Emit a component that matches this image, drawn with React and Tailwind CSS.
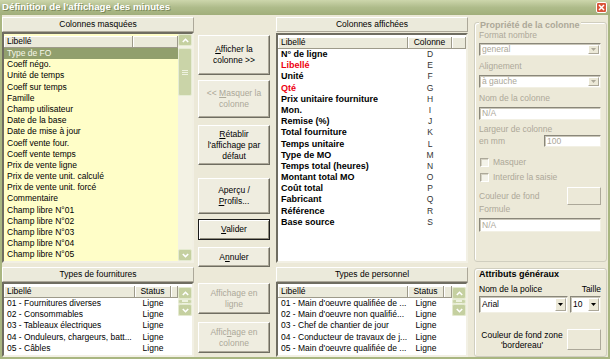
import React from "react";

const masquees = [
  "Type de FO",
  "Coeff négo.",
  "Unité de temps",
  "Coeff sur temps",
  "Famille",
  "Champ utilisateur",
  "Date de la base",
  "Date de mise à jour",
  "Coeff vente four.",
  "Coeff vente temps",
  "Prix de vente ligne",
  "Prix de vente unit. calculé",
  "Prix de vente unit. forcé",
  "Commentaire",
  "Champ libre N°01",
  "Champ libre N°02",
  "Champ libre N°03",
  "Champ libre N°04",
  "Champ libre N°05",
  "Champ libre N°06",
];

const affichees = [
  { label: "N° de ligne", col: "D" },
  { label: "Libellé", col: "E", red: true },
  { label: "Unité", col: "F" },
  { label: "Qté", col: "G", red: true },
  { label: "Prix unitaire fourniture", col: "H" },
  { label: "Mon.", col: "I" },
  { label: "Remise (%)", col: "J" },
  { label: "Total fourniture", col: "K" },
  { label: "Temps unitaire", col: "L" },
  { label: "Type de MO", col: "M" },
  { label: "Temps total (heures)", col: "N" },
  { label: "Montant total MO", col: "O" },
  { label: "Coût total", col: "P" },
  { label: "Fabricant", col: "Q" },
  { label: "Référence", col: "R" },
  { label: "Base source", col: "S" },
];

const fournitures = [
  "01 - Fournitures diverses",
  "02 - Consommables",
  "03 - Tableaux électriques",
  "04 - Onduleurs, chargeurs, batt...",
  "05 - Câbles",
];

const personnel = [
  "01 - Main d'oeuvre qualifiée de ...",
  "02 - Main d'oeuvre non qualifié...",
  "03 - Chef de chantier de jour",
  "04 - Conducteur de travaux de j...",
  "05 - Main d'oeuvre qualifiée de ...",
];

const ScrollArrow = ({ up }) => (
  <div className="h-[12px] w-[14px] shrink-0 flex items-center justify-center bg-[#c5d0a0] border border-[#e4ead0] rounded-[2px]">
    <svg width="7" height="5" viewBox="0 0 7 5">
      <path
        d={up ? "M0.8 4 L3.5 1.3 L6.2 4" : "M0.8 1 L3.5 3.7 L6.2 1"}
        fill="none"
        stroke="#fff"
        strokeWidth="1.6"
      />
    </svg>
  </div>
);

const Scrollbar = ({ thumb }) => (
  <div className="w-[14px] shrink-0 flex flex-col bg-[#f3f2e4]">
    <ScrollArrow up />
    <div className="flex-1 flex flex-col">
      <div className={thumb + " w-[14px] bg-[#cad4a8] border border-[#e6ecd4] rounded-[2px] flex flex-col items-center justify-center gap-[1px]"}>
        <div className="w-[6px] h-px bg-[#eef2e0]" />
        <div className="w-[6px] h-px bg-[#eef2e0]" />
        <div className="w-[6px] h-px bg-[#eef2e0]" />
      </div>
    </div>
    <ScrollArrow />
  </div>
);

const HeadCell = ({ children, className }) => (
  <div className={"h-[12px] flex items-center px-[3px] bg-[#ebeadb] border-r border-b border-[#9d9a8a] shadow-[inset_1px_1px_0_#fff] " + className}>
    {children}
  </div>
);

const SectionHeader = ({ children }) => (
  <div className="h-[15px] shrink-0 flex items-center justify-center bg-[#ebeadb] border border-t-white border-l-white border-b-[#aca899] border-r-[#aca899]">
    {children}
  </div>
);

const Btn = ({ children, className, disabled, def }) => (
  <div
    className={
      "w-[72px] flex flex-col items-center justify-center text-center leading-[11px] bg-[#efede0] border " +
      (def
        ? "border-[#1c1c1c] shadow-[inset_1px_1px_0_#fff,inset_-1px_-1px_0_#8e8b7c] "
        : "border-t-white border-l-white border-b-[#6f6d61] border-r-[#6f6d61] shadow-[inset_-1px_-1px_0_#aca899] ") +
      (disabled ? "text-[#aca899] " : "text-black ") +
      className
    }
  >
    {children}
  </div>
);

const Select = ({ value, disabled, className }) => (
  <div className={"flex bg-white border border-t-[#8a877a] border-l-[#8a877a] border-b-[#f2f0e4] border-r-[#f2f0e4] shadow-[inset_1px_1px_0_#c9c6b8] " + className}>
    <div className={"flex-1 flex items-center px-[2px] " + (disabled ? "text-[#aca899]" : "text-black")}>{value}</div>
    <div className="w-[11px] m-px flex items-center justify-center bg-[#ece9d8] border border-t-white border-l-white border-b-[#aca899] border-r-[#aca899]">
      <svg width="5" height="3" viewBox="0 0 5 3">
        <path d="M0 0 H5 L2.5 3 Z" fill={disabled ? "#aca899" : "#000"} />
      </svg>
    </div>
  </div>
);

const Input = ({ value, className }) => (
  <div className={"flex items-center px-[2px] bg-white text-[#aca899] border border-t-[#8a877a] border-l-[#8a877a] border-b-[#f2f0e4] border-r-[#f2f0e4] shadow-[inset_1px_1px_0_#c9c6b8] " + className}>
    {value}
  </div>
);

const Check = ({ label }) => (
  <div className="flex items-center gap-[4px] h-[10px] text-[#aca899]">
    <div className="w-[9px] h-[9px] ml-[1px] bg-[#f4f3ea] border border-t-[#aca899] border-l-[#aca899] border-b-white border-r-white shadow-[inset_1px_1px_0_#d6d3c4]" />
    <span>{label}</span>
  </div>
);

const ListBox = ({ className, children }) => (
  <div className={"flex border-2 border-t-[#6f6d61] border-l-[#6f6d61] border-b-[#f2f0e4] border-r-[#f2f0e4] overflow-hidden " + className}>
    {children}
  </div>
);

export default function App() {
  return (
    <div className="w-[610px] h-[359px] flex flex-col bg-[#ece9d8] overflow-hidden font-['Liberation_Sans',Arial,sans-serif] text-[8.5px] text-black">
      {/* barre de titre */}
      <div className="h-[15px] shrink-0 flex items-center justify-between pl-[2px] pr-[3px] bg-gradient-to-b from-[#cdd6ac] via-[#aebb8a] to-[#a1af7b]">
        <span className="text-[9.7px] font-bold text-white [text-shadow:1px_1px_0_#7d8a5a]">
          Définition de l'affichage des minutes
        </span>
        <div className="w-[11px] h-[11px] flex items-center justify-center bg-[#d9543a] border border-white rounded-[2px]">
          <svg width="7" height="7" viewBox="0 0 7 7">
            <path d="M1 1 L6 6 M6 1 L1 6" stroke="#fff" strokeWidth="1.5" />
          </svg>
        </div>
      </div>

      <div className="flex-1 flex min-h-0 border-x-2 border-b-2 border-[#a9b681] pt-[2px]">
        {/* colonnes masquées */}
        <div className="w-[192px] flex flex-col">
          <SectionHeader>Colonnes masquées</SectionHeader>
          <ListBox className="h-[231px] bg-[#fffec8]">
            <div className="flex-1 flex flex-col min-w-0">
              <div className="flex shrink-0 mt-[2px]">
                <HeadCell className="w-[129px]">Libellé</HeadCell>
                <HeadCell className="flex-1" />
              </div>
              {masquees.map((m, i) => (
                <div
                  key={m}
                  className={
                    "h-[11.2px] shrink-0 leading-[11.2px] px-[3px] whitespace-nowrap " +
                    (i === 0 ? "bg-[#919f6d] text-[#f7f7ea]" : "")
                  }
                >
                  {m}
                </div>
              ))}
            </div>
            <Scrollbar thumb="mt-[2px] h-[48px]" />
          </ListBox>
          <div className="mt-[4px]">
            <SectionHeader>Types de fournitures</SectionHeader>
          </div>
          <ListBox className="flex-1 bg-white">
            <div className="flex-1 flex flex-col min-w-0">
              <div className="flex shrink-0 mt-[2px]">
                <HeadCell className="w-[131px]">Libellé</HeadCell>
                <HeadCell className="w-[36px] justify-center">Status</HeadCell>
                <HeadCell className="flex-1" />
              </div>
              {fournitures.map((f) => (
                <div key={f} className="flex h-[11.2px] shrink-0 leading-[11.2px] whitespace-nowrap">
                  <div className="w-[131px] px-[3px]">{f}</div>
                  <div className="w-[36px] text-center">Ligne</div>
                </div>
              ))}
            </div>
            <div className="flex flex-col pt-[3px]">
              <Scrollbar thumb="h-[5px]" />
            </div>
          </ListBox>
        </div>

        {/* boutons */}
        <div className="w-[72px] ml-[4px] flex flex-col">
          <Btn className="mt-[18px] h-[40px]">
            <span><u>A</u>fficher la</span>
            <span>colonne &gt;&gt;</span>
          </Btn>
          <Btn className="mt-[5px] h-[38px]" disabled>
            <span>&lt;&lt; <u>M</u>asquer la</span>
            <span>colonne</span>
          </Btn>
          <Btn className="mt-[7px] h-[40px]">
            <span><u>R</u>établir</span>
            <span>l'affichage par</span>
            <span>défaut</span>
          </Btn>
          <Btn className="mt-[13px] h-[36px]">
            <span>Aperçu /</span>
            <span><u>P</u>rofils...</span>
          </Btn>
          <Btn className="mt-[5px] h-[21px]" def>
            <span><u>V</u>alider</span>
          </Btn>
          <Btn className="mt-[7px] h-[20px]">
            <span>A<u>n</u>nuler</span>
          </Btn>
          <Btn className="mt-[16px] h-[31px]" disabled>
            <span>Affichage en</span>
            <span>ligne</span>
          </Btn>
          <Btn className="mt-[8px] h-[31px]" disabled>
            <span>Affic<u>h</u>age en</span>
            <span>colonne</span>
          </Btn>
        </div>

        {/* colonnes affichées */}
        <div className="w-[192px] ml-[6px] flex flex-col">
          <SectionHeader>Colonnes affichées</SectionHeader>
          <ListBox className="h-[230px] mt-[1px] bg-white">
            <div className="flex-1 flex flex-col min-w-0">
              <div className="flex shrink-0 mt-[2px]">
                <HeadCell className="w-[130px]">Libellé</HeadCell>
                <HeadCell className="w-[44px] justify-center">Colonne</HeadCell>
                <HeadCell className="flex-1" />
              </div>
              {affichees.map((a) => (
                <div key={a.label} className="flex h-[11.2px] shrink-0 leading-[11.2px] whitespace-nowrap">
                  <div className={"w-[130px] px-[3px] text-[9px] font-bold " + (a.red ? "text-[#ee0010]" : "text-black")}>
                    {a.label}
                  </div>
                  <div className="w-[44px] text-center text-[#333]">{a.col}</div>
                </div>
              ))}
            </div>
          </ListBox>
          <div className="mt-[4px]">
            <SectionHeader>Types de personnel</SectionHeader>
          </div>
          <ListBox className="flex-1 bg-white">
            <div className="flex-1 flex flex-col min-w-0">
              <div className="flex shrink-0 mt-[2px]">
                <HeadCell className="w-[130px]">Libellé</HeadCell>
                <HeadCell className="w-[36px] justify-center">Status</HeadCell>
                <HeadCell className="flex-1" />
              </div>
              {personnel.map((p) => (
                <div key={p} className="flex h-[11.2px] shrink-0 leading-[11.2px] whitespace-nowrap">
                  <div className="w-[130px] px-[3px]">{p}</div>
                  <div className="w-[36px] text-center">Ligne</div>
                </div>
              ))}
            </div>
            <div className="flex flex-col pt-[3px]">
              <Scrollbar thumb="h-[5px]" />
            </div>
          </ListBox>
        </div>

        {/* propriétés */}
        <div className="w-[133px] ml-[6px] flex flex-col">
          <div className="mt-[5px] h-[240px] flex flex-col border border-[#d0cebf] rounded-[3px] px-[4px] pr-[5px] shadow-[inset_1px_1px_0_#fff]">
            <div className="-mt-[3px] h-[10px] leading-[10px] text-[9px] font-bold text-[#aca899] bg-[#ece9d8] self-start px-[1px]">
              Propriété de la colonne
            </div>
            <div className="h-[10px] leading-[10px] text-[#aca899]">Format nombre</div>
            <Select value="general" disabled className="mt-[3px] h-[13px]" />
            <div className="mt-[5px] h-[10px] leading-[10px] text-[#aca899]">Alignement</div>
            <Select value="à gauche" disabled className="mt-[4px] h-[13px]" />
            <div className="mt-[5px] h-[10px] leading-[10px] text-[#aca899]">Nom de la colonne</div>
            <Input value="N/A" className="mt-[4px] h-[13px]" />
            <div className="mt-[3px] leading-[12px] text-[#aca899] whitespace-nowrap">Largeur de colonne</div>
            <div className="flex justify-between items-start">
              <span className="leading-[12px] text-[#aca899]">en mm</span>
              <Input value="100" className="h-[12px] w-[57px]" />
            </div>
            <div className="mt-[10px]">
              <Check label="Masquer" />
            </div>
            <div className="mt-[5px]">
              <Check label="Interdire la saisie" />
            </div>
            <div className="mt-[5px] flex items-center justify-between">
              <span className="text-[#aca899]">Couleur de fond</span>
              <div className="w-[34px] h-[18px] border border-t-white border-l-white border-b-[#aca899] border-r-[#aca899]" />
            </div>
            <div className="-mt-[1px] h-[10px] leading-[10px] text-[#aca899]">Formule</div>
            <Input value="N/A" className="mt-[4px] h-[14px]" />
          </div>

          <div className="mt-[6px] flex-1 flex flex-col border border-[#d0cebf] rounded-[3px] px-[4px] pr-[5px] shadow-[inset_1px_1px_0_#fff]">
            <div className="h-[10px] leading-[10px] text-[9px] font-bold">Attributs généraux</div>
            <div className="mt-[5px] flex justify-between h-[10px] leading-[10px]">
              <span>Nom de la police</span>
              <span>Taille</span>
            </div>
            <div className="mt-[2px] flex gap-[2px]">
              <Select value="Arial" className="flex-1 h-[17px]" />
              <Select value="10" className="w-[31px] h-[17px]" />
            </div>
            <div className="mt-[16px] flex items-center justify-between">
              <div className="w-[86px] text-center leading-[10px]">
                <div>Couleur de fond zone</div>
                <div>'bordereau'</div>
              </div>
              <div className="w-[34px] h-[21px] border border-t-white border-l-white border-b-[#aca899] border-r-[#aca899]" />
            </div>
          </div>
        </div>
      </div>
    </div>
  );
}
